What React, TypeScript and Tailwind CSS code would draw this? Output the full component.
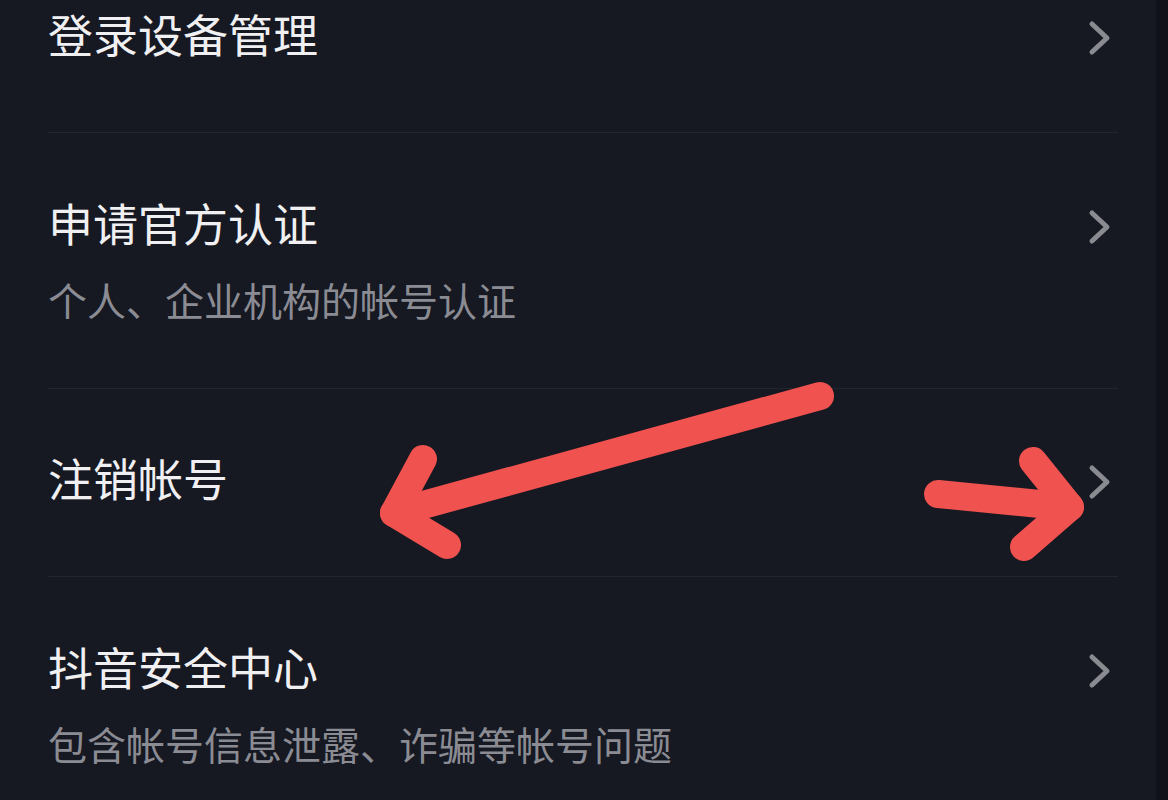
import React from "react";

type Item = { title: string; sub?: string };

const items: Item[] = [
  { title: "登录设备管理" },
  { title: "申请官方认证", sub: "个人、企业机构的帐号认证" },
  { title: "注销帐号" },
  { title: "抖音安全中心", sub: "包含帐号信息泄露、诈骗等帐号问题" },
];

function Chevron() {
  return (
    <svg width="24" height="36" viewBox="0 0 24 36" className="shrink-0">
      <path d="M4 4 L19 18 L4 32" fill="none" stroke="#8a8b91" strokeWidth="5" strokeLinecap="round" strokeLinejoin="round" />
    </svg>
  );
}

function Row({ item, last }: { item: Item; last: boolean }) {
  return (
    <div className={`flex items-start justify-between ${item.sub ? "pt-[60px] pb-[62px]" : "pt-[59px] pb-[68px]"} ${last ? "" : "border-b border-[#23252e]"}`}>
      <div className="flex flex-col">
        <div className="text-[45px] leading-[60px] text-[#f0f0f2]">{item.title}</div>
        {item.sub && (
          <div className="mt-[19px] text-[39px] leading-[54px] text-[#8b8c93]">{item.sub}</div>
        )}
      </div>
      <div className="pr-[6px] mt-[16px]">
        <Chevron />
      </div>
    </div>
  );
}

export default function App() {
  return (
    <div
      className="relative w-[1168px] h-[800px] overflow-hidden bg-[#161822] flex"
      style={{ fontFamily: '"Noto Sans CJK SC", "Noto Sans", sans-serif' }}
    >
      <div className="flex-1 pl-[48px] pr-[38px] -mt-[55px]">
        {items.map((it, i) => (
          <Row key={i} item={it} last={i === items.length - 1} />
        ))}
      </div>
      <div className="w-[12px] bg-[#111219]" />
      <svg className="absolute inset-0 pointer-events-none" width="1168" height="800" viewBox="0 0 1168 800">
        <g fill="none" stroke="#f0524f" strokeWidth="28" strokeLinecap="round" strokeLinejoin="round">
          <path d="M820 396 L394 513" />
          <path d="M423 459 L394 513 L447 545" />
          <path d="M938 494 L1070 507" />
          <path d="M1033 461 L1070 507 L1024 547" />
        </g>
      </svg>
    </div>
  );
}
